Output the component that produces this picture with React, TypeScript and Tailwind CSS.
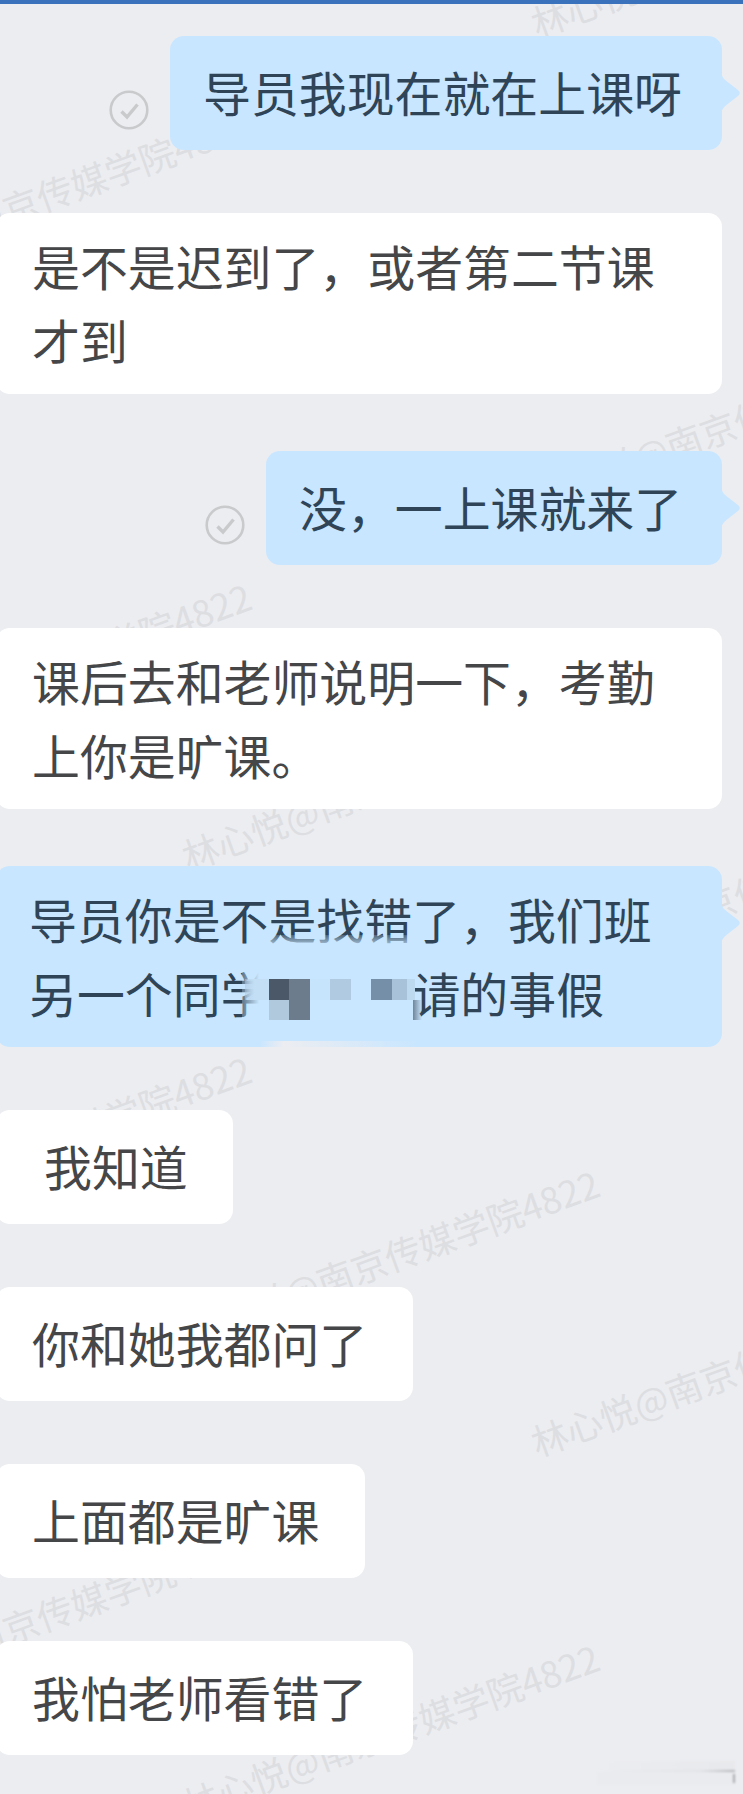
import React from "react";

interface Message {
  id: number;
  from: "me" | "teacher";
  lines: React.ReactNode[];
  className: string;
  read?: boolean;
}

const WATERMARK = "林心悦@南京传媒学院4822";

// Centre of the first glyph of each repeated watermark
const watermarks = [
  { x: 549, y: 17 },
  { x: -148, y: 265 },
  { x: 549, y: 489 },
  { x: -148, y: 738 },
  { x: 200, y: 850 },
  { x: 549, y: 963 },
  { x: -148, y: 1211 },
  { x: 200, y: 1325 },
  { x: 549, y: 1436 },
  { x: -148, y: 1685 },
  { x: 200, y: 1799 },
];

const messages: Message[] = [
  {
    id: 1,
    from: "me",
    lines: ["导员我现在就在上课呀"],
    className: "mt-[32px] w-[552px] pl-[33px]",
    read: true,
  },
  {
    id: 2,
    from: "teacher",
    lines: ["是不是迟到了，或者第二节课", "才到"],
    className: "mt-[63px] w-[726px] pl-[36px]",
  },
  {
    id: 3,
    from: "me",
    lines: ["没，一上课就来了"],
    className: "mt-[57px] w-[456px] pl-[33px]",
    read: true,
  },
  {
    id: 4,
    from: "teacher",
    lines: ["课后去和老师说明一下，考勤", "上你是旷课。"],
    className: "mt-[63px] w-[726px] pl-[36px]",
  },
  {
    id: 5,
    from: "me",
    lines: [
      "导员你是不是找错了，我们班",
      <>
        另一个同学
        <span className="inline-block w-[144px]" />
        请的事假
      </>,
    ],
    className: "mt-[57px] w-[726px] pl-[33px]",
  },
  {
    id: 6,
    from: "teacher",
    lines: ["我知道"],
    className: "mt-[63px] w-[237px] pl-[48px]",
  },
  {
    id: 7,
    from: "teacher",
    lines: ["你和她我都问了"],
    className: "mt-[63px] w-[417px] pl-[36px]",
  },
  {
    id: 8,
    from: "teacher",
    lines: ["上面都是旷课"],
    className: "mt-[63px] w-[369px] pl-[36px]",
  },
  {
    id: 9,
    from: "teacher",
    lines: ["我怕老师看错了"],
    className: "mt-[63px] w-[417px] pl-[36px]",
  },
];

function ReadMark() {
  return (
    <svg
      className="mr-[21px] mb-[20px] h-10 w-10 shrink-0 self-end"
      viewBox="0 0 40 40"
      fill="none"
      stroke="#c9cacc"
    >
      <circle cx="20" cy="20" r="18.3" strokeWidth="2.6" />
      <path d="M12.5 21.5 L18 27 L28.5 14.5" strokeWidth="3.4" />
    </svg>
  );
}

function Tail() {
  return (
    <svg
      className="absolute top-[36px] left-full -ml-px h-[42px] w-[20px]"
      viewBox="0 0 20 42"
      fill="#c8e6ff"
    >
      <path d="M0 0 C1 6 4 8 8 11 L17.5 18.5 Q20 21 17.5 23.5 L8 31 C4 34 1 36 0 42 Z" />
    </svg>
  );
}

// Pixelated patch that hides the name of the classmate
function Mosaic() {
  return (
    <>
      <div className="absolute top-[69px] left-[268px] h-[12px] w-[144px] bg-linear-to-b from-[#c8e6ff]/20 to-[#c8e6ff]/90" />
      <div className="absolute top-[104px] left-[246px] h-[52px] w-[34px] bg-linear-to-r from-[#c8e6ff]/30 via-[#c8e6ff] via-50% to-[#c8e6ff]" />
      <div className="absolute top-[113px] left-[249px] flex h-[41px] w-[180px] flex-col">
        <div className="flex h-[21px]">
          <div className="w-[24px] bg-linear-to-r from-[#a9c4db]/50 to-[#c3dff6] to-40%" />
          <div className="w-[20px] bg-[#4a5867]" />
          <div className="w-[21px] bg-[#6c7c8d]" />
          <div className="w-[20px] bg-[#c6e4fc]" />
          <div className="w-[21px] bg-[#afcae1]" />
          <div className="w-[20px] bg-[#c8e6ff]" />
          <div className="w-[21px] bg-[#768fa8]" />
          <div className="w-[15px] bg-[#a8c2d9]" />
          <div className="w-[8px] bg-[#bdd9f0]" />
        </div>
        <div className="flex h-[20px]">
          <div className="w-[24px]" />
          <div className="w-[20px] bg-[#b0c9dc]" />
          <div className="w-[21px] bg-[#6c7c8d]" />
          <div className="w-[103px] bg-[#c9e7ff]" />
          <div className="w-[9px] bg-linear-to-r from-[#708599] to-[#c8e6ff]/0" />
        </div>
      </div>
      <div className="absolute bottom-0 left-[264px] h-[6px] w-[158px] bg-linear-to-r from-[#ecedf1]/0 via-[#ecedf1] via-15% to-[#ecedf1]/0" />
    </>
  );
}

function Bubble({ message }: { message: Message }) {
  const mine = message.from === "me";
  const double = message.lines.length > 1;
  return (
    <div className={`flex shrink-0 ${mine ? "justify-end pr-[21px]" : "-ml-1"}`}>
      {message.read && <ReadMark />}
      <div
        className={`relative shrink-0 rounded-[14px] whitespace-nowrap text-[47.9px] leading-[74px] ${
          double ? "h-[181px] pt-[15px]" : "h-[114px] pt-[18px]"
        } ${mine ? "bg-[#c8e6ff] text-[#2f4456]" : "bg-white text-[#454648]"} ${
          message.className
        }`}
      >
        {message.lines.map((line, i) => (
          <p key={i}>{line}</p>
        ))}
        {mine && <Tail />}
        {message.id === 5 && <Mosaic />}
      </div>
    </div>
  );
}

export default function App() {
  return (
    <div className="relative h-[1794px] w-[743px] overflow-hidden bg-[#ecedf1] font-['Noto_Sans_CJK_SC',sans-serif]">
      {watermarks.map((mark) => (
        <div
          key={`${mark.x}-${mark.y}`}
          className="absolute origin-[18px_20px] -rotate-20 text-[36.2px] leading-[40px] font-normal whitespace-nowrap text-[#dddee1]"
          style={{ left: mark.x - 18, top: mark.y - 20 }}
        >
          {WATERMARK}
        </div>
      ))}

      <div className="relative flex flex-col">
        <div className="h-[4px] bg-[#3b72bc]" />
        {messages.map((message) => (
          <Bubble key={message.id} message={message} />
        ))}
      </div>

      {/* Faded stamp in the corner */}
      <div className="absolute right-[8px] bottom-[9px] flex h-[24px] w-[138px] flex-col blur-[1px]">
        <div className="ml-[4px] h-[9px] bg-linear-to-r from-[#ecedf1] to-[#e8e9ec]" />
        <div className="h-[2px] bg-linear-to-r from-[#ecedf1] via-[#e2e3e6] via-75% to-[#b4b6b9]" />
        <div className="flex flex-1 justify-end bg-[#eaebef]">
          <div className="mt-[2px] h-[9px] w-[2px] bg-[#a9abae]" />
        </div>
      </div>
    </div>
  );
}
